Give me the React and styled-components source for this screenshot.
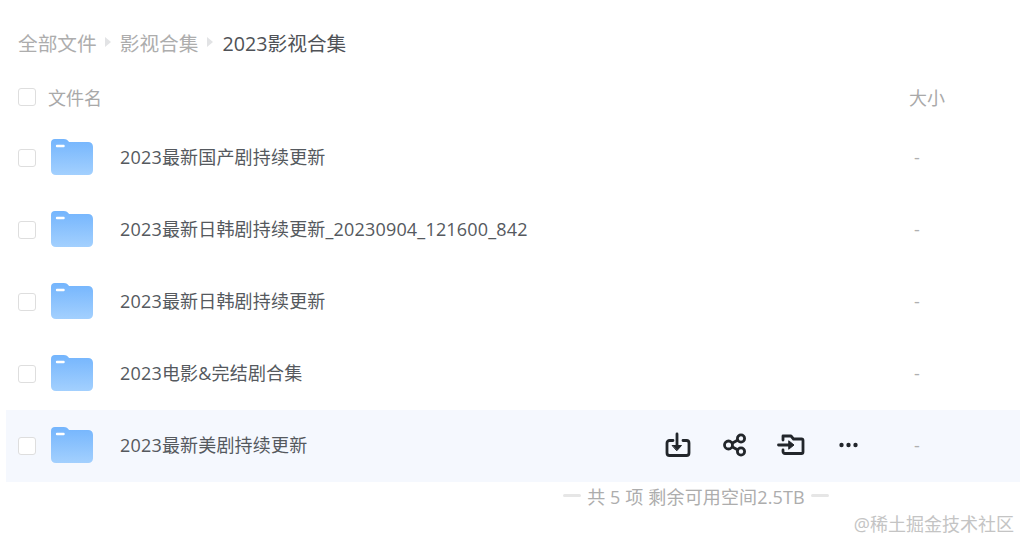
import React from "react";
import styled, { createGlobalStyle } from "styled-components";

const Global = createGlobalStyle`
  html, body { margin: 0; padding: 0; background: #fff; }
  body { font-family: "Open Sans", "Noto Sans CJK SC", sans-serif; overflow: hidden; }
`;
const Page = styled.div`
  position: relative;
  width: 1020px;
  height: 542px;
  overflow: hidden;
  padding-top: 25px;
  box-sizing: border-box;
`;
const Crumbs = styled.nav`
  display: flex;
  align-items: center;
  height: 36px;
  padding-left: 18px;
  font-size: 19.7px;
  color: #a8a8a8;
`;
const Crumb = styled.span`
  margin-top: -1px;
  color: ${(p) => (p.$current ? "#4f5257" : "#adadad")};
`;
const Arrow = styled.span`
  width: 0;
  height: 0;
  margin: 0 ${(p) => (p.$wide ? "10px" : "9px")} 0 8px;
  border-left: 6px solid #e2e3e5;
  border-top: 5.5px solid transparent;
  border-bottom: 5.5px solid transparent;
  transform: translateY(-1px);
`;
const Header = styled.div`
  display: flex;
  align-items: center;
  height: 36px;
  margin-top: 18px;
  padding-left: 18px;
  font-size: 18px;
  color: #a9a9a9;
`;
const Check = styled.span`
  flex: none;
  width: 16px;
  height: 16px;
  border: 1px solid #dedede;
  border-radius: 3px;
  background: #fff;
`;
const HeadName = styled.span`
  margin-left: 12px;
  flex: 1;
`;
const HeadSize = styled.span`
  margin-right: 75px;
`;
const Rows = styled.div`
  margin-top: 7px;
  margin-left: 6px;
`;
const Row = styled.div`
  display: flex;
  align-items: center;
  height: 72px;
  padding-left: 12px;
  background: ${(p) => (p.$active ? "#f5f8fe" : "transparent")};
`;
const Folder = styled.svg`
  flex: none;
  width: 42px;
  height: 36px;
  margin: 0 0 2px 15px;
`;
const Name = styled.span`
  flex: 1;
  margin: 0 0 4px 27px;
  font-size: 18px;
  letter-spacing: 0.18px;
  color: #55595e;
  white-space: nowrap;
`;
const Actions = styled.div`
  position: absolute;
  left: 663px;
  top: 431px;
  display: flex;
  align-items: center;
  gap: 29px;
`;
const ActionIcon = styled.svg`
  width: 28px;
  height: 28px;
  display: block;
`;
const Size = styled.span`
  width: 24px;
  margin: 0 91px 2px 0;
  text-align: center;
  font-size: 18px;
  color: #b0b0b0;
`;
const Footer = styled.div`
  display: flex;
  align-items: center;
  justify-content: center;
  gap: 6px;
  height: 27px;
  margin-left: 371px;
  width: 650px;
  font-size: 18px;
  letter-spacing: 0.15px;
  color: #adadad;
`;
const Dash = styled.span`
  width: 18px;
  height: 3px;
  background: #e6e6e6;
  border-radius: 2px;
`;
const Watermark = styled.span`
  position: absolute;
  right: 6px;
  bottom: 6px;
  font-size: 18px;
  line-height: 24px;
  color: #c4c4c4;
`;

const FolderIcon = () => (
  <Folder viewBox="1 1 43 37" preserveAspectRatio="none">
    <defs>
      <linearGradient id="fg" x1="0" y1="0" x2="0" y2="1">
        <stop offset="0" stopColor="#74b5fd" />
        <stop offset="1" stopColor="#a3d0fe" />
      </linearGradient>
    </defs>
    <path
      d="M5 1h9c3 0 4 1 5.500 3h19.500c3 0 5 2 5 5v24c0 3-2 5-5 5H6c-3 0-5-2-5-5V5c0-2.500 1.500-4 4-4z"
      fill="url(#fg)"
    />
    <rect x="6" y="7" width="9" height="2.500" rx="1" fill="#fff" />
  </Folder>
);

const names = [
  "2023最新国产剧持续更新",
  "2023最新日韩剧持续更新_20230904_121600_842",
  "2023最新日韩剧持续更新",
  "2023电影&完结剧合集",
  "2023最新美剧持续更新",
];

export default function App() {
  return (
    <Page>
      <Global />
      <Crumbs>
        <Crumb>全部文件</Crumb>
        <Arrow />
        <Crumb>影视合集</Crumb>
        <Arrow $wide />
        <Crumb $current>2023影视合集</Crumb>
      </Crumbs>
      <Header>
        <Check />
        <HeadName>文件名</HeadName>
        <HeadSize>大小</HeadSize>
      </Header>
      <Rows>
        {names.map((n, i) => (
          <Row key={n} $active={i === 4}>
            <Check />
            <FolderIcon />
            <Name>{n}</Name>
            <Size>-</Size>
          </Row>
        ))}
      </Rows>
      <Actions>
        <ActionIcon viewBox="0 0 28 28" fill="none" stroke="#22262b" strokeWidth="2.800" strokeLinecap="round" strokeLinejoin="round">
          <path d="M9 9.500H5.500a2.500 2.500 0 0 0-2.500 2.500v10a2.500 2.500 0 0 0 2.500 2.500h17a2.500 2.500 0 0 0 2.500-2.500V12a2.500 2.500 0 0 0-2.500-2.500H19" transform="translate(1 0)" />
          <path d="M14 3v13" />
          <path d="M9.500 14.500h9L14 19.500z" fill="#22262b" strokeWidth="1" />
        </ActionIcon>
        <ActionIcon viewBox="-1 0 28 28" fill="none" stroke="#22262b" strokeWidth="2.800" strokeLinecap="round">
          <circle cx="7.500" cy="14" r="4" />
          <circle cx="20" cy="7.500" r="3.600" />
          <circle cx="20" cy="20.500" r="3.600" />
          <path d="M11.500 12l5-2.800M11.500 16l5 2.800" />
        </ActionIcon>
        <ActionIcon viewBox="0 0 28 28" fill="none" stroke="#22262b" strokeWidth="2.800" strokeLinecap="round" strokeLinejoin="round">
          <path d="M6 9V5h8l2.500 3h8a1.500 1.500 0 0 1 1.500 1.500V21a1.500 1.500 0 0 1-1.500 1.500H8A2 2 0 0 1 6 20.500V19" />
          <path d="M1.500 14h12" />
          <path d="M12 10l5 4-5 4z" fill="#22262b" strokeWidth="1" />
        </ActionIcon>
        <ActionIcon viewBox="0 0 28 28" fill="#22262b">
          <circle cx="7.500" cy="14" r="2.200" />
          <circle cx="14.500" cy="14" r="2.200" />
          <circle cx="21.500" cy="14" r="2.200" />
        </ActionIcon>
      </Actions>
      <Footer>
        <Dash />
        <span>共 5 项 剩余可用空间2.5TB</span>
        <Dash />
      </Footer>
      <Watermark>@稀土掘金技术社区</Watermark>
    </Page>
  );
}
